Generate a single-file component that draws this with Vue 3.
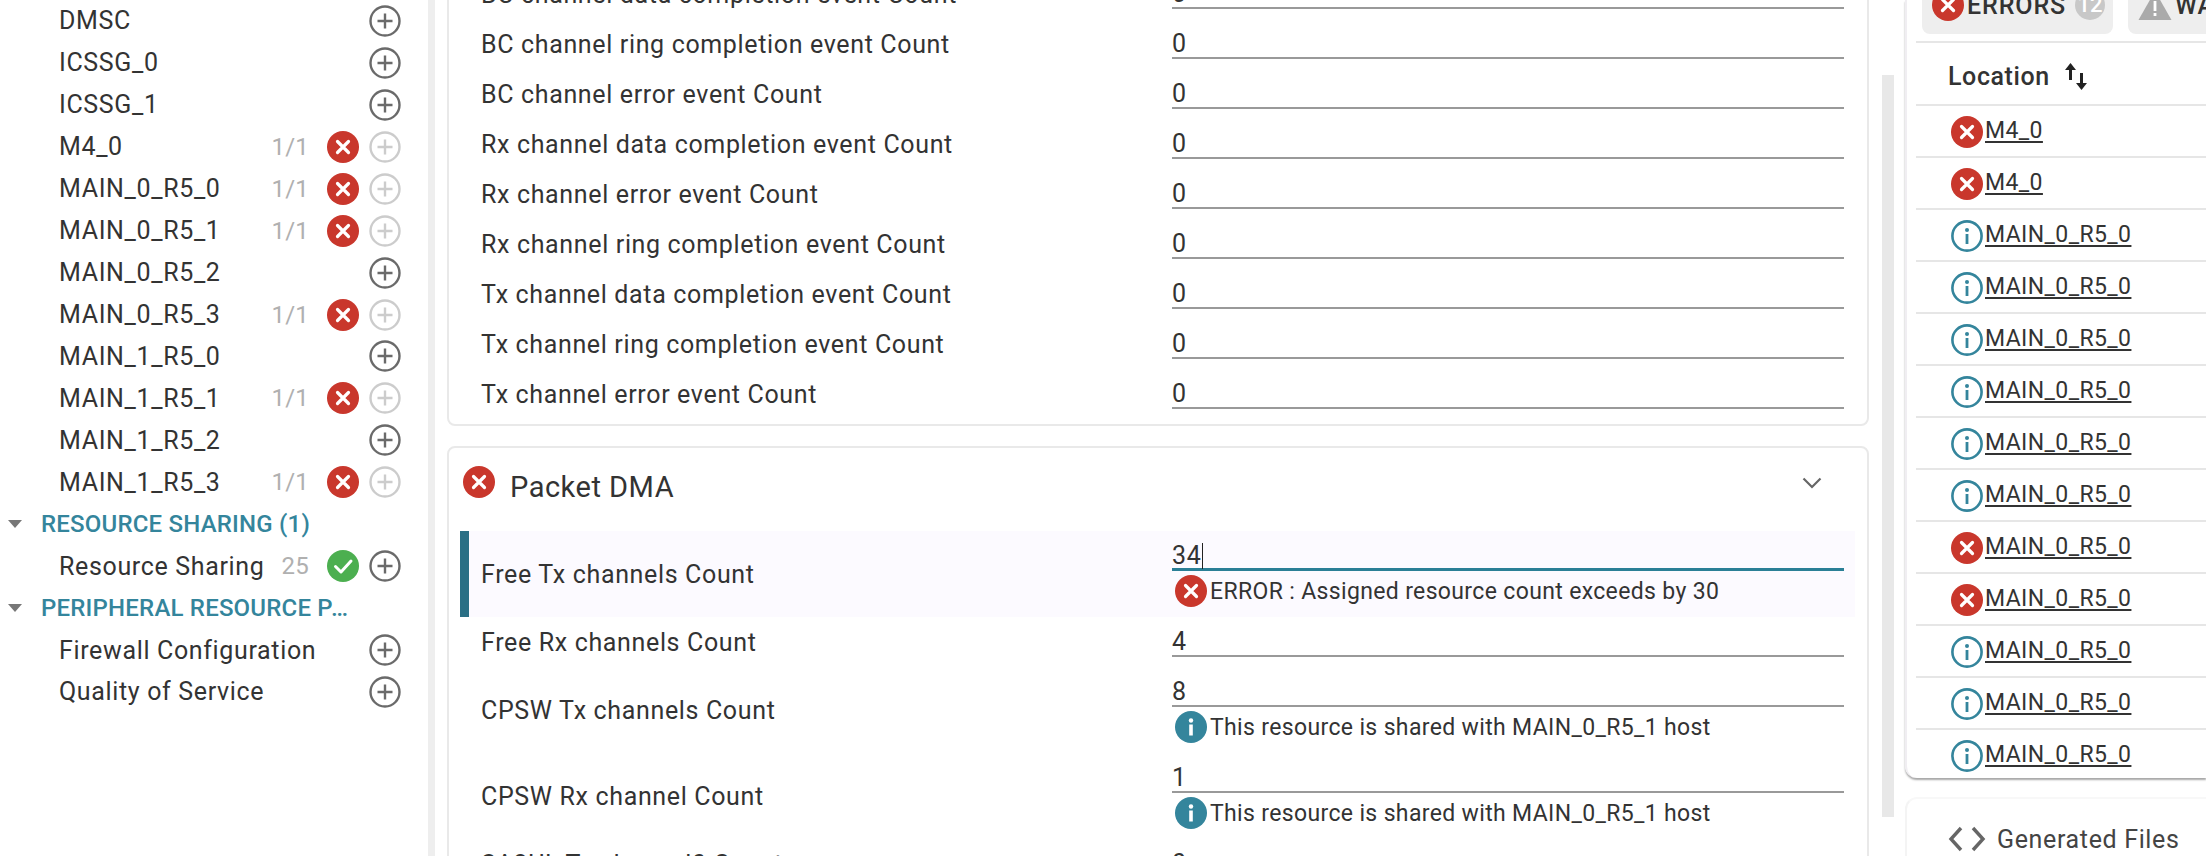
<template>
  <div class="app">
    <aside class="sidebar">
      <template v-for="item in sideItems" :key="item.name">
        <div v-if="item.section" class="section-row">
          <span class="caret"></span>
          <span class="section-name">{{ item.name }}</span>
        </div>
        <div v-else class="side-row">
          <span class="side-name">{{ item.name }}</span>
          <span v-if="item.count" class="side-count">{{ item.count }}</span>
          <svg v-if="item.status === 'error'" class="status" viewBox="0 0 32 32">
            <circle cx="16" cy="16" r="16" fill="#c9372c" />
            <path d="M10.5 10.5l11 11M21.5 10.5l-11 11" stroke="#fff" stroke-width="3.2" stroke-linecap="round" />
          </svg>
          <svg v-if="item.status === 'ok'" class="status" viewBox="0 0 32 32">
            <circle cx="16" cy="16" r="16" fill="#4caf50" />
            <path d="M8.5 16.5l5.5 5.5 10-11" fill="none" stroke="#fff" stroke-width="3" stroke-linecap="round" stroke-linejoin="round" />
          </svg>
          <svg :class="['add', { off: item.status === 'error' }]" viewBox="0 0 32 32">
            <circle cx="16" cy="16" r="14.5" fill="none" stroke="currentColor" stroke-width="2.4" />
            <path d="M16 8.5v15M8.5 16h15" stroke="currentColor" stroke-width="2.4" />
          </svg>
        </div>
      </template>
    </aside>

    <main class="main">
      <section class="card first">
        <div v-for="row in eventRows" :key="row" class="row">
          <span class="label">{{ row }}</span>
          <div class="field"><div class="value">0</div></div>
        </div>
      </section>

      <section class="card">
        <header class="card-head">
          <svg class="status" viewBox="0 0 32 32">
            <circle cx="16" cy="16" r="16" fill="#c9372c" />
            <path d="M10.5 10.5l11 11M21.5 10.5l-11 11" stroke="#fff" stroke-width="3.2" stroke-linecap="round" />
          </svg>
          <h2>Packet DMA</h2>
          <svg class="chevron" viewBox="0 0 20 12">
            <path d="M1.5 1.5L10 10l8.5-8.5" fill="none" stroke="#666" stroke-width="2.2" />
          </svg>
        </header>

        <div class="row tall active">
          <span class="label">Free Tx channels Count</span>
          <div class="field">
            <div class="value focused">34<span class="cursor"></span></div>
            <div class="help">
              <svg class="status" viewBox="0 0 32 32">
                <circle cx="16" cy="16" r="16" fill="#c9372c" />
                <path d="M10.5 10.5l11 11M21.5 10.5l-11 11" stroke="#fff" stroke-width="3.2" stroke-linecap="round" />
              </svg>
              <span>ERROR : Assigned resource count exceeds by 30</span>
            </div>
          </div>
        </div>

        <div class="row">
          <span class="label">Free Rx channels Count</span>
          <div class="field"><div class="value">4</div></div>
        </div>

        <div v-for="row in sharedRows" :key="row.name" class="row tall">
          <span class="label">{{ row.name }}</span>
          <div class="field">
            <div class="value">{{ row.value }}</div>
            <div class="help">
              <svg class="status" viewBox="0 0 32 32">
                <circle cx="16" cy="16" r="16" fill="#34859c" />
                <circle cx="16" cy="9.5" r="2.2" fill="#fff" />
                <rect x="14.2" y="13.5" width="3.6" height="11" fill="#fff" />
              </svg>
              <span>This resource is shared with MAIN_0_R5_1 host</span>
            </div>
          </div>
        </div>

        <div class="row">
          <span class="label">SA2UL Tx channel0 Count</span>
          <div class="field"><div class="value">0</div></div>
        </div>
      </section>
    </main>

    <div class="scrollbar"></div>

    <aside class="panel">
      <div class="problems">
        <div class="tabs">
          <div class="tab errors">
            <svg class="status" viewBox="0 0 32 32">
              <circle cx="16" cy="16" r="16" fill="#c9372c" />
              <path d="M10.5 10.5l11 11M21.5 10.5l-11 11" stroke="#fff" stroke-width="3.2" stroke-linecap="round" />
            </svg>
            <span class="tab-name">ERRORS</span>
            <span class="badge">12</span>
          </div>
          <div class="tab warnings">
            <svg class="triangle" viewBox="0 0 34 30">
              <path d="M17 1L33.5 30H.5z" fill="#aaa" />
              <rect x="15.6" y="11" width="2.8" height="10" fill="#fff" />
              <rect x="15.6" y="23" width="2.8" height="3" fill="#fff" />
            </svg>
            <span class="tab-name">WARNINGS</span>
          </div>
        </div>
        <div class="table-head">
          <span>Location</span>
          <svg class="sort" viewBox="0 0 22 28">
            <path d="M5.5 17V5" fill="none" stroke="#222" stroke-width="3" />
            <path d="M5.5 0L11 7H0z" fill="#222" />
            <path d="M16.5 10v12" fill="none" stroke="#222" stroke-width="3" />
            <path d="M16.5 27L11 20h11z" fill="#222" />
          </svg>
        </div>
        <div v-for="(entry, i) in problems" :key="i" class="problem">
          <svg v-if="entry.error" class="status" viewBox="0 0 32 32">
            <circle cx="16" cy="16" r="16" fill="#c9372c" />
            <path d="M10.5 10.5l11 11M21.5 10.5l-11 11" stroke="#fff" stroke-width="3.2" stroke-linecap="round" />
          </svg>
          <svg v-else class="status" viewBox="0 0 32 32">
            <circle cx="16" cy="16" r="14.6" fill="none" stroke="#34859c" stroke-width="2.6" />
            <circle cx="16" cy="10" r="2" fill="#34859c" />
            <rect x="14.6" y="14" width="2.8" height="10" fill="#34859c" />
          </svg>
          <a class="location">{{ entry.name }}</a>
        </div>
      </div>

      <div class="generated">
        <svg class="code" viewBox="0 0 38 26">
          <path d="M13 2L3 13l10 11M25 2l10 11-10 11" fill="none" stroke="#666" stroke-width="3.4" />
        </svg>
        <span>Generated Files</span>
      </div>
    </aside>
  </div>
</template>

<script setup>
const side = (name, count, status) => ({ name, count, status })

const sideItems = [
  side('DMSC'),
  side('ICSSG_0'),
  side('ICSSG_1'),
  side('M4_0', '1/1', 'error'),
  side('MAIN_0_R5_0', '1/1', 'error'),
  side('MAIN_0_R5_1', '1/1', 'error'),
  side('MAIN_0_R5_2'),
  side('MAIN_0_R5_3', '1/1', 'error'),
  side('MAIN_1_R5_0'),
  side('MAIN_1_R5_1', '1/1', 'error'),
  side('MAIN_1_R5_2'),
  side('MAIN_1_R5_3', '1/1', 'error'),
  { name: 'RESOURCE SHARING (1)', section: true },
  side('Resource Sharing', '25', 'ok'),
  { name: 'PERIPHERAL RESOURCE PARTITIONING', section: true },
  side('Firewall Configuration'),
  side('Quality of Service')
]

const eventRows = [
  'BC channel data completion event Count',
  'BC channel ring completion event Count',
  'BC channel error event Count',
  'Rx channel data completion event Count',
  'Rx channel error event Count',
  'Rx channel ring completion event Count',
  'Tx channel data completion event Count',
  'Tx channel ring completion event Count',
  'Tx channel error event Count'
]

const sharedRows = [
  { name: 'CPSW Tx channels Count', value: '8' },
  { name: 'CPSW Rx channel Count', value: '1' }
]

// same order as the table in the problems panel
const problems = [true, true, false, false, false, false, false, false, true, true, false, false, false].map((error, i) => ({
  error,
  name: i < 2 ? 'M4_0' : 'MAIN_0_R5_0'
}))
</script>

<style>
html,
body {
  margin: 0;
  background: #fff;
  overflow: hidden;
}
</style>

<style scoped>
.app {
  display: flex;
  width: 2206px;
  height: 856px;
  overflow: hidden;
  font-family: Roboto, "Liberation Sans", sans-serif;
  color: #333;
}

.status {
  flex: none;
  width: 32px;
  height: 32px;
}

/* left tree */
.sidebar {
  flex: none;
  box-sizing: border-box;
  width: 435px;
  border-right: 7px solid #eee;
  font-size: 25px;
  letter-spacing: 0.65px;
}

.side-row,
.section-row {
  display: flex;
  align-items: center;
  height: 41.94px;
  white-space: nowrap;
}

.side-row {
  padding: 0 27px 0 59px;
}

.side-name {
  flex: 1;
}

.side-count {
  margin-right: 18px;
  color: #b0b0b0;
  font-size: 24px;
  letter-spacing: 0.2px;
}

.add {
  flex: none;
  width: 32px;
  height: 32px;
  margin-left: 10px;
  color: #6a6a6a;
}

.add.off {
  color: #ccc;
}

.section-row {
  padding-left: 8px;
}

.caret {
  flex: none;
  width: 0;
  height: 0;
  margin-right: 19px;
  border-top: 8px solid #777;
  border-left: 7px solid transparent;
  border-right: 7px solid transparent;
}

.section-name {
  width: 322px;
  overflow: hidden;
  text-overflow: ellipsis;
  font-size: 24px;
  font-weight: 500;
  letter-spacing: 0.2px;
  color: #34859c;
}

/* middle cards */
.main {
  flex: none;
  box-sizing: border-box;
  width: 1447px;
  padding: 0 13px 0 12px;
}

.card {
  margin-bottom: 20px;
  border: 2px solid #e9e9e9;
  border-radius: 8px;
  background: #fff;
}

.first {
  margin-top: -33px;
  padding-bottom: 5px;
}

.card-head {
  display: flex;
  align-items: flex-start;
  box-sizing: border-box;
  height: 83px;
  padding: 18px 0 0 14px;
}

.card-head h2 {
  flex: 1;
  margin: 0 0 0 15px;
  font-size: 29px;
  font-weight: 400;
  letter-spacing: 0.5px;
  line-height: 42px;
}

.chevron {
  flex: none;
  width: 20px;
  height: 12px;
  margin: 11px 45px 0 0;
}

.row {
  display: grid;
  grid-template-columns: 691px 1fr;
  align-items: center;
  box-sizing: border-box;
  height: 50px;
  margin: 0 12px 0 11px;
  padding: 0 11px 0 12px;
  border-left: 9px solid transparent;
  font-size: 25px;
  letter-spacing: 0.65px;
}

.row.tall {
  height: 86px;
}

.row.active {
  border-left-color: #2a6f85;
  background: #fcfaff;
}

.field {
  align-self: start;
}

.value {
  box-sizing: border-box;
  height: 40px;
  padding-top: 11px;
  border-bottom: 2px solid #999;
  line-height: 27px;
}

.value.focused {
  border-bottom: 3px solid #2a7f96;
}

.cursor {
  display: inline-block;
  height: 26px;
  margin-left: 1px;
  border-left: 1px solid #222;
  vertical-align: -5px;
}

.help {
  display: flex;
  align-items: center;
  gap: 3px;
  height: 40px;
  padding-left: 3px;
  font-size: 23px;
  letter-spacing: 0.35px;
}

/* scrollbar */
.scrollbar {
  flex: none;
  width: 12px;
  height: 742px;
  margin-top: 75px;
  background: #e8e8e8;
}

/* right panel */
.panel {
  flex: none;
  width: 301px;
  margin-left: 11px;
}

.problems {
  height: 778px;
  overflow: hidden;
  box-sizing: border-box;
  border-left: 2px solid #f0eef2;
  border-radius: 0 0 0 12px;
  box-shadow: 0 2px 2px rgba(0, 0, 0, 0.35);
}

.tabs {
  display: flex;
  gap: 15px;
  box-sizing: border-box;
  height: 43px;
  margin-left: 9px;
  padding-left: 6px;
  border-bottom: 2px solid #e6e6e6;
}

.tab {
  display: flex;
  flex: none;
  align-items: center;
  box-sizing: border-box;
  height: 56px;
  margin-top: -22px;
  padding-bottom: 2px;
  border-radius: 8px;
  background: #eee;
  font-size: 25px;
  font-weight: 500;
  letter-spacing: 0.9px;
  white-space: nowrap;
}

.errors {
  width: 191px;
  padding-left: 10px;
}

.warnings {
  width: 190px;
  padding-left: 10px;
}

.tab-name {
  margin-left: 3px;
}

.badge {
  flex: none;
  width: 30px;
  height: 30px;
  margin-left: 9px;
  border-radius: 50%;
  background: #c8c8c8;
  color: #fff;
  font-size: 22px;
  letter-spacing: 0;
  line-height: 30px;
  text-align: center;
}

.triangle {
  flex: none;
  width: 34px;
  height: 30px;
}

.table-head {
  display: flex;
  align-items: center;
  gap: 15px;
  box-sizing: border-box;
  height: 63px;
  margin-left: 9px;
  padding: 6px 0 0 32px;
  border-bottom: 2px solid #e6e6e6;
  font-size: 25px;
  font-weight: 500;
  letter-spacing: 0.6px;
}

.sort {
  width: 22px;
  height: 28px;
}

.problem {
  display: flex;
  align-items: center;
  gap: 2px;
  box-sizing: border-box;
  height: 52px;
  margin-left: 9px;
  padding: 2px 0 0 35px;
  border-bottom: 2px solid #e6e6e6;
  font-size: 23px;
  letter-spacing: 0.4px;
}

.location {
  text-decoration: underline;
  text-decoration-thickness: 2px;
  text-underline-offset: 3px;
  margin-top: -4px;
  color: #333;
}

.generated {
  display: flex;
  align-items: center;
  gap: 11px;
  box-sizing: border-box;
  height: 90px;
  margin-top: 19px;
  padding: 0 0 8px 41px;
  border-left: 2px solid #f4f4f4;
  border-top: 2px solid #f8f8f8;
  border-radius: 12px 0 0 0;
  font-size: 25px;
  letter-spacing: 0.65px;
  color: #444;
}

.code {
  flex: none;
  width: 38px;
  height: 26px;
}
</style>
